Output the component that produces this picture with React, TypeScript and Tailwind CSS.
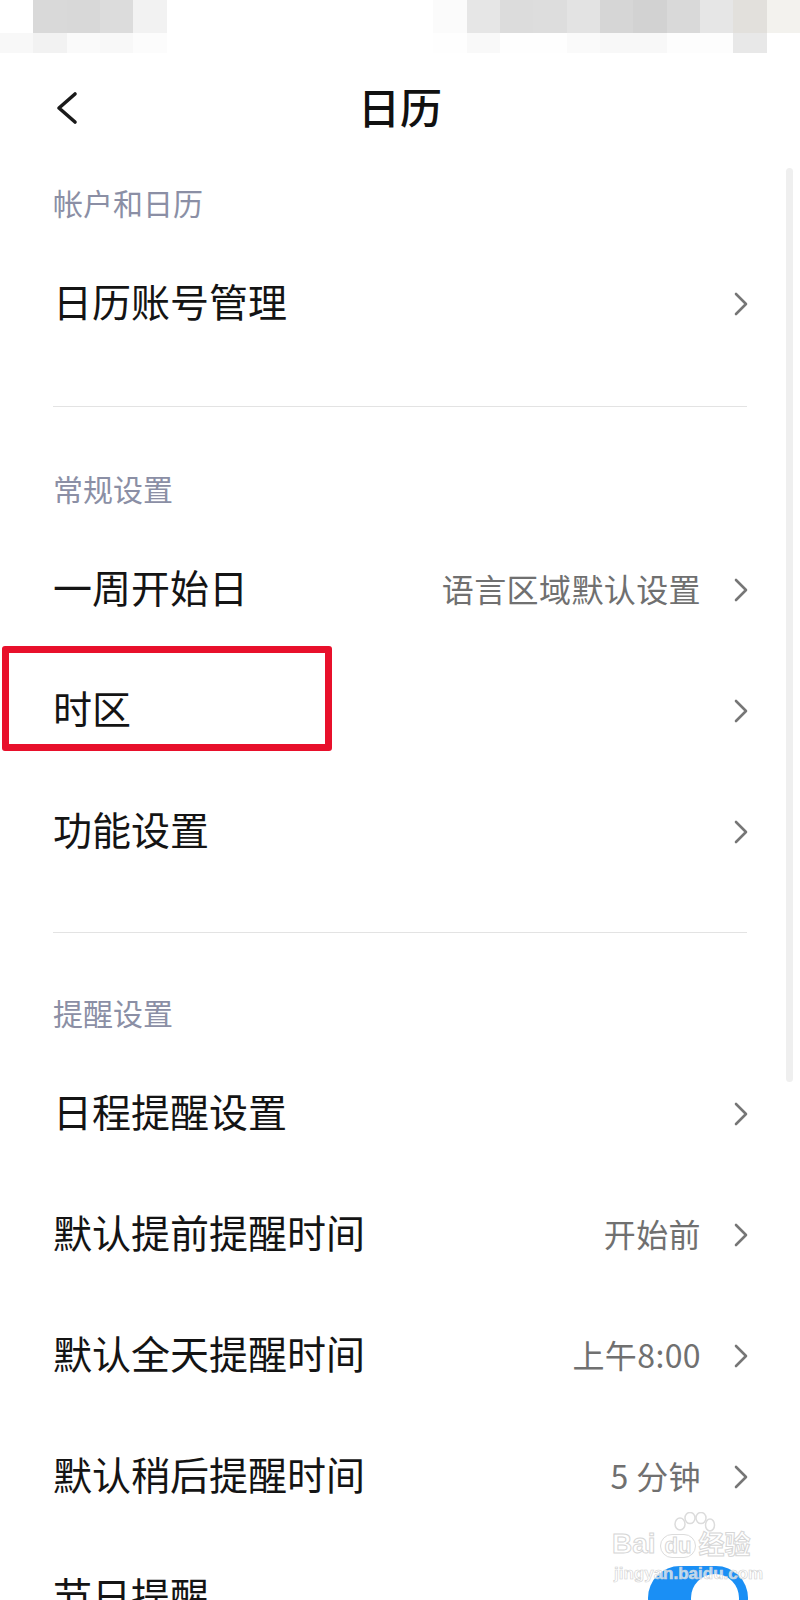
import React from "react";

// =====================
// Data
// =====================
const topRow = [
  "bg-white", "bg-[#d9d9d9]", "bg-[#d8d8d8]", "bg-[#dcdcdc]", "bg-[#f2f2f2]",
  "bg-white", "bg-white", "bg-white", "bg-white", "bg-white", "bg-white", "bg-white", "bg-white",
  "bg-[#fbfbfb]", "bg-[#e6e6e6]", "bg-[#dcdcdc]", "bg-[#dddddd]", "bg-[#e3e3e3]",
  "bg-[#d6d6d6]", "bg-[#d2d2d2]", "bg-[#d9d9d9]", "bg-[#e6e6e6]", "bg-[#e2e0dc]", "bg-[#f3f2ee]",
];
const bottomRow = [
  "bg-[#f8f8f8]", "bg-[#f2f2f2]", "bg-[#fafafa]", "bg-[#f8f8f8]", "bg-[#fcfcfc]",
  "bg-white", "bg-white", "bg-white", "bg-white", "bg-white", "bg-white", "bg-white", "bg-white",
  "bg-[#fefefe]", "bg-[#f9f9f9]", "bg-[#fefefe]", "bg-[#fefefe]", "bg-[#fafafa]",
  "bg-[#f8f8f8]", "bg-[#f8f8f8]", "bg-[#fdfdfd]", "bg-[#fdfdfd]", "bg-[#e8e8e8]", "bg-white",
];

const font = "font-['Noto_Sans_CJK_SC','Noto_Sans',sans-serif]";

// =====================
// Pieces
// =====================
function Chevron() {
  return (
    <svg width="14" height="24" viewBox="0 0 14 24" fill="none">
      <path d="M2 2 L12 12 L2 22" stroke="#767676" strokeWidth="2.6" strokeLinecap="round" strokeLinejoin="round" />
    </svg>
  );
}

function SectionTitle({ text, top }: { text: string; top: string }) {
  return (
    <div className={`${top} pb-[26px] px-[53px]`}>
      <p className="text-[30px] leading-[30px] text-[#8b8fa5]">{text}</p>
    </div>
  );
}

function Row({ label, value, children }: { label: string; value?: string; children?: React.ReactNode }) {
  return (
    <div className="relative h-[121px] flex items-center justify-between pl-[53px] pr-[52px]">
      <span className="text-[39px] leading-none text-[#141414] -translate-y-[3px]">{label}</span>
      {children ?? (
        <div className="flex items-center gap-[33px]">
          {value && <span className="text-[32px] leading-none text-[#707070] tracking-[0.4px] -translate-y-[2px]">{value}</span>}
          <Chevron />
        </div>
      )}
    </div>
  );
}

function Divider() {
  return <div className="mx-[53px] h-px bg-[#e3e3e3]" />;
}

// =====================
// App
// =====================
export default function App() {
  return (
    <div className={`relative w-[800px] h-[1600px] overflow-hidden bg-white ${font}`}>
      {/* blurred status bar */}
      <div className="flex h-[33px]">
        {topRow.map((c, i) => (
          <div key={i} className={`w-[33.34px] shrink-0 ${c}`} />
        ))}
      </div>
      <div className="flex h-[20px]">
        {bottomRow.map((c, i) => (
          <div key={i} className={`w-[33.34px] shrink-0 ${c}`} />
        ))}
      </div>

      {/* nav */}
      <div className="relative h-[107px] flex items-center justify-center">
        <svg className="absolute left-[54px] top-[38px]" width="26" height="34" viewBox="0 0 26 34" fill="none">
          <path d="M21 3 L5 17 L21 31" stroke="#1a1a1a" strokeWidth="3.6" strokeLinecap="round" strokeLinejoin="round" />
        </svg>
        <h1 className="text-[42px] leading-none font-medium text-[#111] -translate-y-[1px]">日历</h1>
      </div>

      {/* 帐户和日历 */}
      <SectionTitle text="帐户和日历" top="pt-[27px]" />
      <Row label="日历账号管理" />
      <div className="h-[42px]" />
      <Divider />

      {/* 常规设置 */}
      <SectionTitle text="常规设置" top="pt-[66px]" />
      <Row label="一周开始日" value="语言区域默认设置" />
      <Row label="时区">
        <Chevron />
        <div className="absolute left-[2px] top-[-4px] w-[330px] h-[105px] border-[7px] border-[#e8102b] rounded-[3px]" />
      </Row>
      <Row label="功能设置" />
      <div className="h-[40px]" />
      <Divider />

      {/* 提醒设置 */}
      <SectionTitle text="提醒设置" top="pt-[64px]" />
      <Row label="日程提醒设置" />
      <Row label="默认提前提醒时间" value="开始前" />
      <Row label="默认全天提醒时间" value="上午8:00" />
      <Row label="默认稍后提醒时间" value="5 分钟" />
      <Row label="节日提醒">
        <div className="w-[100px] h-[64px] rounded-full bg-[#1a8ff5] flex items-center justify-end pr-[9px]">
          <div className="w-[48px] h-[48px] rounded-full bg-white" />
        </div>
      </Row>

      {/* scrollbar */}
      <div className="absolute left-[786px] top-[168px] w-[7px] h-[914px] rounded-full bg-[#efefef]" />

      {/* watermark */}
      <div className="absolute left-[612px] top-[1512px] w-[150px] pointer-events-none">
        <svg className="absolute left-[58px] top-[0px]" width="46" height="28" viewBox="0 0 46 28" fill="none" stroke="#dcdcdc" strokeWidth="1.5">
          <ellipse cx="10" cy="12" rx="5" ry="6" />
          <ellipse cx="20" cy="6" rx="5" ry="5.5" />
          <ellipse cx="31" cy="6" rx="5" ry="5.5" />
          <ellipse cx="40" cy="13" rx="4.5" ry="6" />
        </svg>
        <div className="absolute left-0 top-[18px] flex items-end font-['Liberation_Sans','Noto_Sans_CJK_SC',sans-serif] text-[28px] leading-none font-bold text-white/70 [-webkit-text-stroke:1px_#d6d6d6]">
          <span>Bai</span>
          <span className="text-[22px] ml-[4px] px-[4px] rounded-full border border-[#dcdcdc]">du</span>
          <span className="text-[26px] ml-[2px]">经验</span>
        </div>
        <div className="absolute left-[2px] top-[53px] font-['Liberation_Sans',sans-serif] text-[17px] leading-none font-bold text-white/70 [-webkit-text-stroke:0.6px_#cfcfcf] whitespace-nowrap">
          jingyan.baidu.com
        </div>
      </div>
    </div>
  );
}
